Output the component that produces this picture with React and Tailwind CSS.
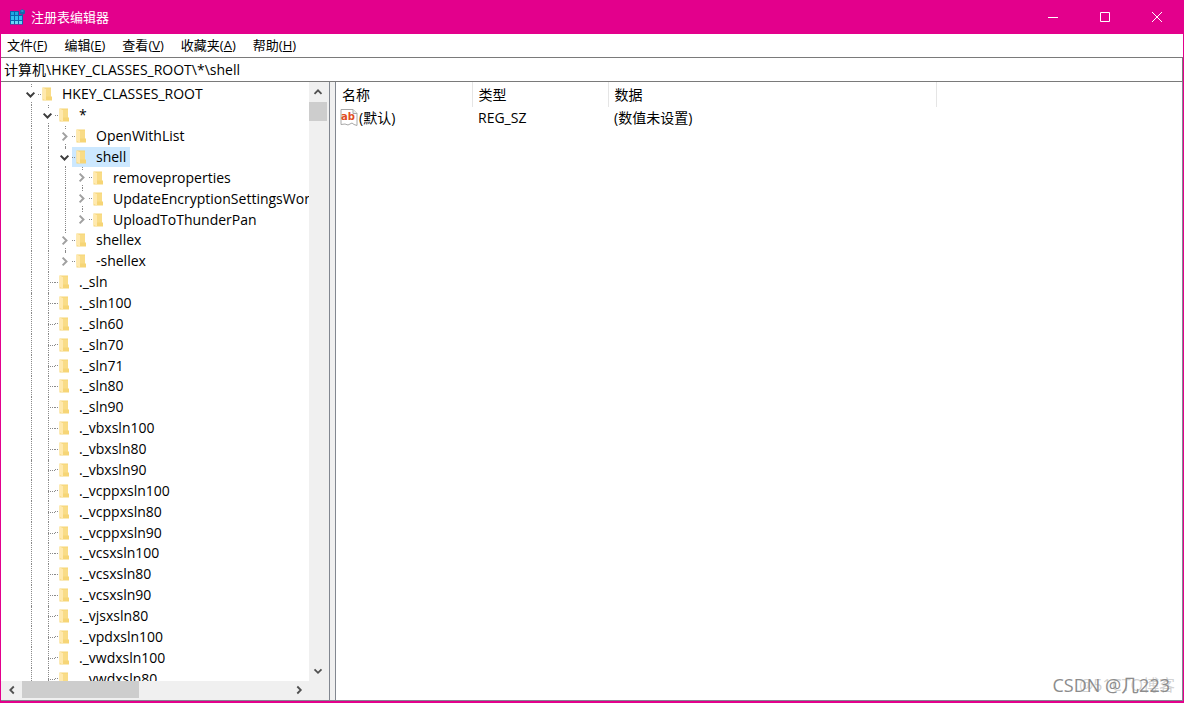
import React, { useState } from 'react';

// guides: one letter per indent column
// l = line, e = line up and down + arrow, u = line up only + arrow, t = leaf connector
const nodes = [
  { id: 1, guides: 'e', open: true, name: 'HKEY_CLASSES_ROOT' },
  { id: 2, guides: 'le', open: true, name: '*' },
  { id: 3, guides: 'lle', name: 'OpenWithList' },
  { id: 4, guides: 'lle', open: true, name: 'shell' },
  { id: 5, guides: 'llle', name: 'removeproperties' },
  { id: 6, guides: 'llle', name: 'UpdateEncryptionSettingsWork' },
  { id: 7, guides: 'lllu', name: 'UploadToThunderPan' },
  { id: 8, guides: 'lle', name: 'shellex' },
  { id: 9, guides: 'llu', name: '-shellex' },
  ...[
    '._sln', '._sln100', '._sln60', '._sln70', '._sln71', '._sln80', '._sln90',
    '._vbxsln100', '._vbxsln80', '._vbxsln90',
    '._vcppxsln100', '._vcppxsln80', '._vcppxsln90',
    '._vcsxsln100', '._vcsxsln80', '._vcsxsln90',
    '._vjsxsln80', '._vpdxsln100', '._vwdxsln100', '._vwdxsln80',
  ].map((name, i) => ({ id: 10 + i, guides: 'lt', name })),
];

const menus = [
  ['文件', 'F'],
  ['编辑', 'E'],
  ['查看', 'V'],
  ['收藏夹', 'A'],
  ['帮助', 'H'],
];

const Chevron = ({ className, d }) => (
  <svg viewBox="0 0 10 10" className={className} fill="none" stroke="currentColor" strokeWidth="1.8">
    <path d={d} />
  </svg>
);

const UP = 'M1.5 6.8 5 3.3 8.5 6.8';
const DOWN = 'M1.5 3.3 5 6.8 8.5 3.3';
const LEFT = 'M6.8 1.5 3.3 5 6.8 8.5';
const RIGHT = 'M3.3 1.5 6.8 5 3.3 8.5';

const Folder = () => (
  <svg viewBox="0 0 11 14" className="w-[11px] h-[14px] shrink-0">
    <path d="M0.5 0.5h8.5v9h1v4H0.5z" fill="#f6d576" />
    <path d="M0.5 0.5l3.5 1.5v11.5l-3.5-1.5z" fill="#ffe9ae" />
    <path d="M4 1.5h5v8H4z" fill="#f9dc87" />
  </svg>
);

const Guide = ({ type, open }) => {
  const arrow = type === 'e' || type === 'u';
  return (
    <span className="relative flex w-[17px] shrink-0 items-center justify-center self-stretch">
      <span
        className={`absolute left-[10px] top-0 border-l border-dotted border-[#8a8a8a] ${type === 'u' ? 'h-1/2' : 'h-full'}`}
      />
      {type === 't' && <span className="absolute left-[10px] right-0 top-1/2 border-t border-dotted border-[#8a8a8a]" />}
      {arrow && (
        <span className="relative ml-[2px] flex h-[15px] w-[15px] items-center justify-center bg-white">
          <Chevron
            className={open ? 'h-[11px] w-[11px] text-[#3c3c3c]' : 'h-[11px] w-[11px] text-[#a0a0a0]'}
            d={open ? DOWN : RIGHT}
          />
        </span>
      )}
    </span>
  );
};

const RegistryIcon = () => (
  <svg viewBox="0 0 16 16" className="h-[16px] w-[16px]">
    <path d="M1 2h9v4h4v9.5H1z" fill="#0b64ad" />
    <path d="M2 3h3v3H2zM6 3h3v3H6z" fill="#1ea7e0" />
    <path d="M2 7h3v4H2zM6 7h3v4H6zM10 7h3v4h-3z" fill="#2fc0ee" />
    <path d="M2 12h3v3H2zM6 12h3v3H6zM10 12h3v3h-3z" fill="#67d8f7" />
    <path d="M13.2 0.2 16 1.6v3l-2.8 1.4-2.4-1.4v-3z" fill="#1668ad" />
    <path d="M13.2 1 15 2l-1.8 1-1.7-1z" fill="#3a9bd6" />
  </svg>
);

const StringIcon = () => (
  <svg viewBox="0 0 18 18" className="h-[18px] w-[18px] shrink-0">
    <path d="M1 0.5h12l4 4V16.5l-3-1-2-1.5-4 2-3-1-4 .5z" fill="#fff" stroke="#a8a8a8" />
    <path d="M13 0.5v4h4" fill="#eee" stroke="#a8a8a8" />
    <text x="8" y="11" textAnchor="middle" fontFamily="DejaVu Sans" fontWeight="bold" fontSize="10" fill="#e04e25">ab</text>
  </svg>
);

const TreePane = () => {
  const [selected, setSelected] = useState(4);

  return (
    <section className="flex w-[329px] shrink-0 flex-col border-r border-[#828790] bg-[#f0f0f0] pb-[2px] pr-[2px]">
      <div className="flex min-h-0 flex-1">
        <div className="min-w-0 flex-1 overflow-hidden bg-white pl-[20px] pt-[2px]">
          <ul className="grid h-[605px] auto-rows-fr">
            {nodes.map((node) => (
              <li key={node.id} className="flex min-h-0 items-center">
                {node.guides.split('').map((g, i) => (
                  <Guide key={i} type={g} open={node.open} />
                ))}
                <button
                  onClick={() => setSelected(node.id)}
                  className={`flex shrink-0 items-center self-stretch whitespace-nowrap pr-1 ${selected === node.id ? 'bg-[#cce8ff]' : ''}`}
                >
                  <span className="mr-px w-[3px] border-t border-dotted border-[#8a8a8a]" />
                  <Folder />
                  <span className="ml-[9px]">{node.name}</span>
                </button>
              </li>
            ))}
          </ul>
        </div>
        <div className="flex w-[18px] flex-col items-center">
          <button aria-label="向上滚动" className="flex h-[20px] w-full items-center justify-center text-[#505050]">
            <Chevron className="h-[10px] w-[10px]" d={UP} />
          </button>
          <div className="h-[19px] w-full bg-[#cdcdcd]" />
          <button aria-label="向下滚动" className="mt-auto flex h-[20px] w-full items-center justify-center text-[#505050]">
            <Chevron className="h-[10px] w-[10px]" d={DOWN} />
          </button>
        </div>
      </div>
      <div className="flex h-[17px] pr-[18px]">
        <button aria-label="向左滚动" className="flex w-[21px] items-center justify-center text-[#505050]">
          <Chevron className="h-[10px] w-[10px]" d={LEFT} />
        </button>
        <div className="w-[117px] bg-[#cdcdcd]" />
        <button aria-label="向右滚动" className="ml-auto flex w-[21px] items-center justify-center text-[#505050]">
          <Chevron className="h-[10px] w-[10px]" d={RIGHT} />
        </button>
      </div>
    </section>
  );
};

const ValuesPane = () => (
  <section className="min-w-0 flex-1 border-x border-[#828790] bg-white">
    <table className="w-full table-fixed text-left">
      <colgroup>
        <col className="w-[136px]" />
        <col className="w-[136px]" />
        <col className="w-[328px]" />
        <col />
      </colgroup>
      <thead>
        <tr className="h-[25px]">
          <th className="border-r border-[#e5e5e5] pl-[6px] font-normal">名称</th>
          <th className="border-r border-[#e5e5e5] pl-[6px] font-normal">类型</th>
          <th className="border-r border-[#e5e5e5] pl-[6px] font-normal">数据</th>
          <th />
        </tr>
      </thead>
      <tbody>
        <tr className="h-[21px]">
          <td className="pl-1">
            <span className="flex items-center gap-px">
              <StringIcon />
              (默认)
            </span>
          </td>
          <td className="pl-[6px]">REG_SZ</td>
          <td className="pl-[6px]">(数值未设置)</td>
          <td />
        </tr>
      </tbody>
    </table>
  </section>
);

export default function App() {
  const [path, setPath] = useState('计算机\\HKEY_CLASSES_ROOT\\*\\shell');

  return (
    <div className="relative flex h-screen flex-col overflow-hidden border border-t-0 border-b-2 border-[#e3008c] bg-[#f0f0f0] font-['Open_Sans','Noto_Sans_CJK_SC',sans-serif] text-[14px] leading-[20px] text-black">
      <header className="flex h-[34px] shrink-0 items-center bg-[#e3008c] pl-2 text-white">
        <RegistryIcon />
        <h1 className="ml-[6px] text-[13px]">注册表编辑器</h1>
        <div className="ml-auto flex self-stretch">
          <button aria-label="最小化" className="flex w-[52px] items-center justify-center">
            <svg viewBox="0 0 10 10" className="h-[10px] w-[10px]" stroke="currentColor"><path d="M0 5.5h10" /></svg>
          </button>
          <button aria-label="最大化" className="flex w-[52px] items-center justify-center">
            <svg viewBox="0 0 10 10" className="h-[10px] w-[10px]" fill="none" stroke="currentColor"><path d="M.5.5h9v9h-9z" /></svg>
          </button>
          <button aria-label="关闭" className="flex w-[52px] items-center justify-center">
            <svg viewBox="0 0 10 10" className="h-[10px] w-[10px]" stroke="currentColor"><path d="M0 0l10 10M10 0 0 10" /></svg>
          </button>
        </div>
      </header>

      <nav className="flex h-[23px] shrink-0 items-center gap-[17px] bg-white pb-[2px] pl-[6px] text-[13px]">
        {menus.map(([label, key]) => (
          <button key={key}>
            {label}(<span className="underline">{key}</span>)
          </button>
        ))}
      </nav>

      <input
        aria-label="地址"
        value={path}
        onChange={(e) => setPath(e.target.value)}
        className="h-[25px] w-full shrink-0 border border-l-0 border-[#7a7a7a] bg-white pb-[2px] pl-[3px] outline-none"
      />

      <main className="flex min-h-0 flex-1 border-b border-[#828790]">
        <TreePane />
        <div className="w-[5px] shrink-0 cursor-col-resize" />
        <ValuesPane />
      </main>

      <div className="pointer-events-none absolute bottom-[2px] right-[13px] text-[18px] leading-[28px] text-[#8c8c8c]">CSDN @几223</div>
      <div className="pointer-events-none absolute bottom-[2px] right-[8px] text-[16px] leading-[28px] text-[#8c8c8c]/40">@51CTO博客</div>
    </div>
  );
}
